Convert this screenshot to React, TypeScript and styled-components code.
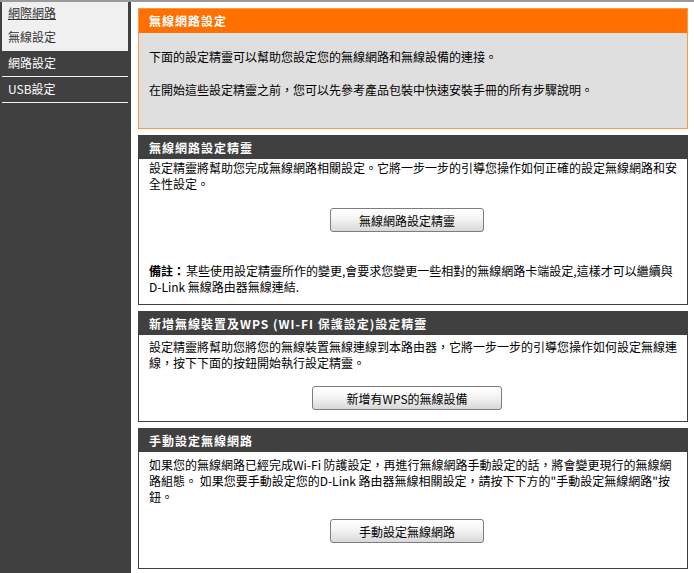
import React from "react";
import styled, { createGlobalStyle } from "styled-components";

const GlobalStyle = createGlobalStyle`
  html, body {
    margin: 0;
    padding: 0;
    background: #ffffff;
  }
  body {
    font-family: "Noto Sans CJK TC", "Liberation Sans", sans-serif;
    font-size: 12px;
    color: #000;
  }
`;

const Page = styled.div`
  display: flex;
  min-height: 100vh;
  box-sizing: border-box;
  border-top: 2px solid #9a9a9a;
`;

const Sidebar = styled.nav`
  width: 131px;
  flex-shrink: 0;
  background: #404040;
  padding: 0 3px 0 2px;
  box-sizing: border-box;
  display: flex;
  flex-direction: column;
`;

const SubMenu = styled.div`
  background: #f0f0f0;
  padding-bottom: 1px;
`;

const SubLink = styled.a<{ $active?: boolean }>`
  display: block;
  height: 24px;
  line-height: 22px;
  padding-left: 6px;
  color: #333;
  text-decoration: ${(p) => (p.$active ? "underline" : "none")};
`;

const NavItem = styled.a`
  display: block;
  height: 25px;
  line-height: 24px;
  padding-left: 6px;
  color: #fff;
  text-decoration: none;
  border-bottom: 1px solid #f0f0f0;
`;

const Main = styled.main`
  flex: 1;
  background: #fff;
  padding: 6px 6px 0 7px;
  display: flex;
  flex-direction: column;
  gap: 6px;
`;

const Box = styled.section<{ $intro?: boolean }>`
  border: 1px solid ${(p) => (p.$intro ? "#f29b50" : "#404040")};
  background: ${(p) => (p.$intro ? "#dfdfdf" : "#fff")};
`;

const BoxHeader = styled.h2<{ $intro?: boolean }>`
  margin: 0;
  height: ${(p) => (p.$intro ? 24 : 23)}px;
  line-height: ${(p) => (p.$intro ? 24 : 23)}px;
  padding: 0 10px;
  background: ${(p) => (p.$intro ? "#ff7000" : "#404040")};
  color: #fff;
  font-size: 12px;
  font-weight: bold;
  letter-spacing: 1px;
`;

const BoxBody = styled.div<{ $top: number; $bottom: number; $intro?: boolean }>`
  padding: ${(p) => p.$top}px 10px ${(p) => p.$bottom}px;
  display: flex;
  flex-direction: column;
`;

const Para = styled.p<{ $gap?: number }>`
  margin: 0;
  line-height: 16px;
  margin-top: ${(p) => p.$gap ?? 0}px;
`;

const NoteLabel = styled.strong`
  font-weight: bold;
  margin-right: 1px;
`;

const ButtonRow = styled.div<{ $top: number; $bottom: number }>`
  display: flex;
  justify-content: center;
  padding: ${(p) => p.$top}px 12px ${(p) => p.$bottom}px 0;
`;

const Button = styled.button<{ $w: number }>`
  width: ${(p) => p.$w}px;
  height: 24px;
  font-family: inherit;
  font-size: 12px;
  color: #000;
  background: linear-gradient(#ffffff, #f4f4f4 45%, #d8d8d8);
  border: 1px solid #7d7d7d;
  border-radius: 3px;
  cursor: pointer;
`;

export default function App() {
  return (
    <>
      <GlobalStyle />
      <Page>
        <Sidebar>
          <SubMenu>
            <SubLink $active href="#">網際網路</SubLink>
            <SubLink href="#">無線設定</SubLink>
          </SubMenu>
          <NavItem href="#">網路設定</NavItem>
          <NavItem href="#">USB設定</NavItem>
        </Sidebar>
        <Main>
          <Box $intro>
            <BoxHeader $intro>無線網路設定</BoxHeader>
            <BoxBody $intro $top={16} $bottom={30}>
              <Para>下面的設定精靈可以幫助您設定您的無線網路和無線設備的連接。</Para>
              <Para $gap={17}>
                在開始這些設定精靈之前，您可以先參考產品包裝中快速安裝手冊的所有步驟說明。
              </Para>
            </BoxBody>
          </Box>

          <Box>
            <BoxHeader>無線網路設定精靈</BoxHeader>
            <BoxBody $top={1} $bottom={9}>
              <Para>
                設定精靈將幫助您完成無線網路相關設定。它將一步一步的引導您操作如何正確的設定無線網路和安全性設定。
              </Para>
              <ButtonRow $top={16} $bottom={31}>
                <Button $w={154}>無線網路設定精靈</Button>
              </ButtonRow>
              <Para>
                <NoteLabel>備註：</NoteLabel>某些使用設定精靈所作的變更,會要求您變更一些相對的無線網路卡端設定,這樣才可以繼續與D-Link 無線路由器無線連結.
              </Para>
            </BoxBody>
          </Box>

          <Box>
            <BoxHeader>新增無線裝置及WPS (WI-FI 保護設定)設定精靈</BoxHeader>
            <BoxBody $top={4} $bottom={11}>
              <Para>
                設定精靈將幫助您將您的無線裝置無線連線到本路由器，它將一步一步的引導您操作如何設定無線連線，按下下面的按鈕開始執行設定精靈。
              </Para>
              <ButtonRow $top={15} $bottom={0}>
                <Button $w={190}>新增有WPS的無線設備</Button>
              </ButtonRow>
            </BoxBody>
          </Box>

          <Box>
            <BoxHeader>手動設定無線網路</BoxHeader>
            <BoxBody $top={5} $bottom={25}>
              <Para>
                如果您的無線網路已經完成Wi-Fi 防護設定，再進行無線網路手動設定的話，將會變更現行的無線網路組態。 如果您要手動設定您的D-Link 路由器無線相關設定，請按下下方的"手動設定無線網路"按鈕。
              </Para>
              <ButtonRow $top={14} $bottom={0}>
                <Button $w={154}>手動設定無線網路</Button>
              </ButtonRow>
            </BoxBody>
          </Box>
        </Main>
      </Page>
    </>
  );
}
